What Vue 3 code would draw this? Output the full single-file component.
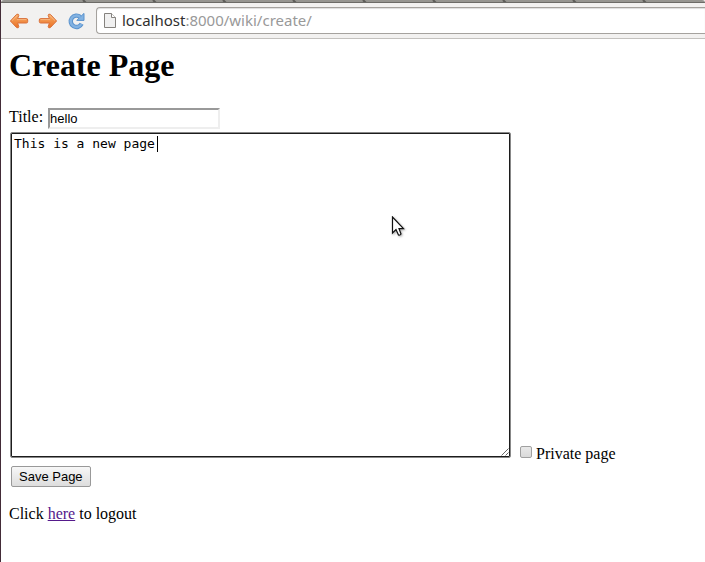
<script setup>
import { ref } from 'vue'

const title = ref('hello')
const body = ref('This is a new page')
const isPrivate = ref(false)
const tabs = 10
</script>

<template>
  <div class="window">
    <header class="chrome">
      <div class="tabs">
        <svg v-for="n in tabs" :key="n" class="tab" viewBox="0 0 71 3" preserveAspectRatio="xMaxYMid slice" aria-hidden="true">
          <path d="M67 0 L70 3" stroke="#5c5b57" stroke-width="2" />
        </svg>
      </div>
      <nav class="toolbar">
        <button class="tool" type="button" aria-label="Back">
          <svg viewBox="0 0 20 18" width="20" height="18">
            <path d="M1.4 9 L7.6 2.4 Q9.6 1.4 9.8 3.4 L8.6 6.6 H17.4 Q18.7 6.6 18.7 8 V9.6 Q18.7 11 17.4 11 H8.6 L9.8 14.6 Q9.6 16.6 7.6 15.6 Z" fill="url(#orange)" stroke="#d9713c" stroke-width="1" stroke-linejoin="round" />
            <path d="M3 8.6 L8.2 3.6 M8 7.6 H17.4" fill="none" stroke="#fac594" stroke-width="1" opacity=".7" />
            <defs>
              <linearGradient id="orange" x1="0" y1="0" x2="0" y2="1">
                <stop offset="0" stop-color="#f8ae6a" />
                <stop offset="1" stop-color="#ea7022" />
              </linearGradient>
            </defs>
          </svg>
        </button>
        <button class="tool" type="button" aria-label="Forward">
          <svg viewBox="0 0 20 18" width="20" height="18">
            <path d="M18.6 9 L12.4 2.4 Q10.4 1.4 10.2 3.4 L11.4 6.6 H2.6 Q1.3 6.6 1.3 8 V9.6 Q1.3 11 2.6 11 H11.4 L10.2 14.6 Q10.4 16.6 12.4 15.6 Z" fill="url(#orange)" stroke="#d9713c" stroke-width="1" stroke-linejoin="round" />
            <path d="M11.8 3.6 L17 8.6 M2.6 7.6 H12" fill="none" stroke="#fac594" stroke-width="1" opacity=".7" />
          </svg>
        </button>
        <button class="tool" type="button" aria-label="Reload">
          <svg viewBox="0 0 20 18" width="20" height="18">
            <path d="M13.2 5 A5.7 5.7 0 1 0 14.6 11.8" fill="none" stroke="#5b93cd" stroke-width="4.4" />
            <path d="M17 1.4 V8.4 H9.8 L12.2 6 L14.2 4 Z" fill="#82b2e2" stroke="#5b93cd" stroke-linejoin="round" />
            <path d="M13.2 5 A5.7 5.7 0 1 0 14.4 12" fill="none" stroke="#82b2e2" stroke-width="2.4" />
          </svg>
        </button>
        <div class="address">
          <svg class="page-icon" viewBox="0 0 12 15" width="12" height="15" aria-hidden="true">
            <path d="M0.5 0.5 H7.5 L11.5 4.5 V14.5 H0.5 Z" fill="#f0f0f0" stroke="#85827e" />
            <path d="M7.5 0.5 V4.5 H11.5" fill="#fff" stroke="#85827e" />
          </svg>
          <span class="url"><span class="host">localhost</span>:8000/wiki/create/</span>
        </div>
      </nav>
    </header>

    <main class="page">
      <h1>Create Page</h1>
      <form @submit.prevent>
        <div class="title-row">
          <label for="title">Title:</label>
          <input id="title" v-model="title" class="title-input" type="text" />
        </div>
        <div class="body-row">
          <div class="editor">
            <textarea v-model="body" class="body-input" aria-label="Page body" spellcheck="false"></textarea>
            <span class="caret"></span>
            <svg class="grip" viewBox="0 0 8 8" width="8" height="8" aria-hidden="true">
              <path d="M0.5 7.5 L7.5 0.5 M4.5 7.5 L7.5 4.5" stroke="#666" stroke-width="1" />
            </svg>
            <svg class="pointer" viewBox="0 0 14 21" width="14" height="21" aria-hidden="true">
              <path d="M1.5 1 V17 L5 13.5 L7.5 19 Q9 19.6 10 18 L8 12.7 H12.5 Z" fill="#fff" stroke="#111" stroke-width="1.2" />
            </svg>
          </div>
          <label class="private"><input v-model="isPrivate" class="check" type="checkbox" />Private page</label>
        </div>
        <button class="save" type="submit">Save Page</button>
      </form>
      <p>Click <a href="#logout">here</a> to logout</p>
    </main>
  </div>
</template>

<style>
body {
  margin: 0;
  background: #fff;
}
</style>

<style scoped>
.window {
  box-sizing: border-box;
  min-height: 100vh;
  border-left: 1px solid #432c38;
  color: #000;
  font: 16px/18px "Liberation Serif", serif;
}
.chrome {
  background: #f2f1f0;
  border-bottom: 1px solid #c3c1be;
}
.tabs {
  display: flex;
  height: 2px;
  overflow: hidden;
  padding-left: 16px;
  background: #969590;
  border-bottom: 1px solid #6c6b67;
  border-radius: 3px 3px 0 0;
}
.tab {
  flex: 0 0 70px;
  height: 3px;
}
.toolbar {
  display: flex;
  align-items: center;
  padding: 4px 0 4px 8px;
}
.tool {
  display: flex;
  flex: none;
  margin-right: 9px;
  padding: 0;
  border: 0;
  background: none;
}
.address {
  display: flex;
  box-sizing: border-box;
  flex: 1;
  align-items: center;
  gap: 6px;
  height: 27px;
  padding: 0 0 1px 7px;
  border: 1px solid #a5a29e;
  border-right: 0;
  border-radius: 4px 0 0 4px;
  background: #fff;
  box-shadow: inset 0 1px 1px #ddd;
}
.url {
  color: #999;
  font: 15px/20px "Noto Sans", sans-serif;
}
.host {
  color: #303030;
}
.page {
  padding: 8px;
}
h1 {
  margin: 0 0 24px;
  font-size: 32px;
  line-height: 37px;
}
.title-row {
  display: flex;
  align-items: flex-start;
  gap: 5px;
}
.title-input {
  box-sizing: border-box;
  width: 172px;
  height: 21px;
  padding: 1px 0;
  border: 2px solid;
  border-color: #999 #eee #eee #999;
  border-radius: 0;
  outline: 0;
  background: #fff;
  font: 13px "Liberation Sans", sans-serif;
}
.body-row {
  display: flex;
  align-items: flex-end;
  gap: 9px;
  padding: 3px 1px 0;
}
.editor {
  position: relative;
  flex: 0 1 501px;
}
.body-input {
  display: block;
  box-sizing: border-box;
  width: 100%;
  height: 326px;
  padding: 3px;
  border: 1px solid #888;
  border-radius: 2px;
  outline: 0;
  box-shadow: inset 0 0 0 1px #1c1c1c;
  resize: none;
  background: #fff;
  color: #000;
  font: 13px/16px "DejaVu Sans Mono", monospace;
}
.caret {
  position: absolute;
  top: 4px;
  left: 147px;
  width: 1px;
  height: 16px;
  background: #000;
}
.grip {
  position: absolute;
  right: 2px;
  bottom: 2px;
}
.pointer {
  position: absolute;
  top: 84px;
  left: 381px;
  filter: drop-shadow(1px 1px 1px #aaa);
}
.private {
  display: flex;
  align-items: center;
  gap: 4px;
  margin-bottom: -5px;
}
.check {
  box-sizing: border-box;
  width: 12px;
  height: 12px;
  margin: 0 0 4px;
  appearance: none;
  border: 1px solid #a0a0a0;
  border-radius: 2px;
  background: linear-gradient(#e9e9e9, #dadada);
}
.check:checked {
  background: #777;
}
.save {
  display: block;
  box-sizing: border-box;
  height: 21px;
  margin: 8px 2px 0;
  padding: 0 7px;
  border: 1px solid #999;
  border-radius: 2px;
  background: linear-gradient(#f7f7f7, #ddd);
  color: #000;
  font: 13px "Liberation Sans", sans-serif;
}
p {
  margin: 18px 0;
}
a {
  color: #551a8b;
}
</style>
